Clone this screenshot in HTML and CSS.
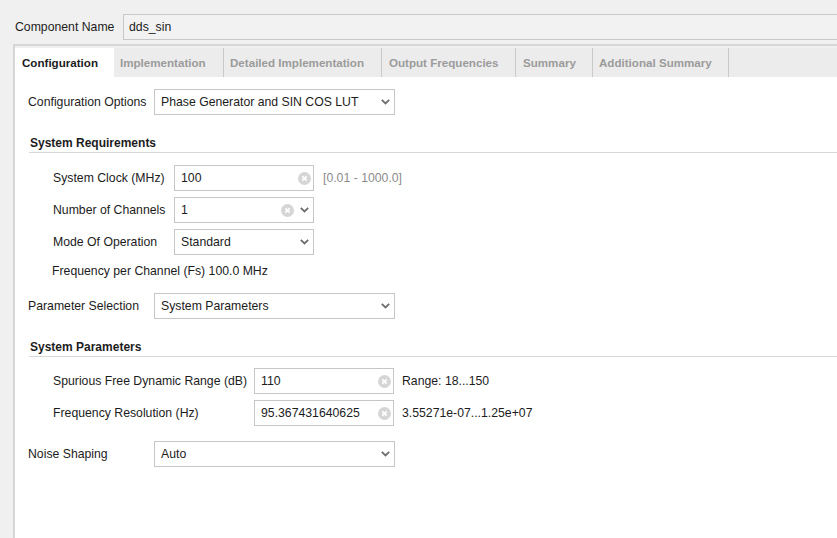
FILE: index.html
```html
<!DOCTYPE html>
<html>
<head>
<meta charset="utf-8">
<link rel="stylesheet" href="styles.css">
</head>
<body>
<div class="top">
  <span class="top-label">Component Name</span>
  <div class="name-field">dds_sin</div>
</div>
<div class="panel">
  <div class="tabs">
    <div class="tab active t1">Configuration</div>
    <div class="tab t2">Implementation</div>
    <div class="tab t3">Detailed Implementation</div>
    <div class="tab t4">Output Frequencies</div>
    <div class="tab t5">Summary</div>
    <div class="tab t6">Additional Summary</div>
  </div>
  <div class="content">
    <div class="row">
      <span class="lbl lbl-a">Configuration Options</span>
      <div class="select w-wide">
        <span class="val">Phase Generator and SIN COS LUT</span>
        <svg class="chev" width="9" height="6" viewBox="0 0 9 6"><path d="M0.8 0.8 L4.5 4.5 L8.2 0.8" fill="none" stroke="#6e6e6e" stroke-width="1.8"/></svg>
      </div>
    </div>

    <div class="section">System Requirements</div>
    <div class="sub">
      <div class="row">
        <span class="lbl lbl-b">System Clock (MHz)</span>
        <div class="input">
          <span class="val">100</span>
          <svg class="clear" width="13" height="13" viewBox="0 0 13 13"><circle cx="6.5" cy="6.5" r="6.5" fill="#d6d6d6"/><path d="M4.3 4.3 L8.7 8.7 M8.7 4.3 L4.3 8.7" stroke="#fff" stroke-width="1.7"/></svg>
        </div>
        <span class="hint grey">[0.01 - 1000.0]</span>
      </div>
      <div class="row">
        <span class="lbl lbl-b">Number of Channels</span>
        <div class="input combo">
          <span class="val">1</span>
          <svg class="clear" width="13" height="13" viewBox="0 0 13 13"><circle cx="6.5" cy="6.5" r="6.5" fill="#d6d6d6"/><path d="M4.3 4.3 L8.7 8.7 M8.7 4.3 L4.3 8.7" stroke="#fff" stroke-width="1.7"/></svg>
          <svg class="chev chev-gap" width="9" height="6" viewBox="0 0 9 6"><path d="M0.8 0.8 L4.5 4.5 L8.2 0.8" fill="none" stroke="#6e6e6e" stroke-width="1.8"/></svg>
        </div>
      </div>
      <div class="row">
        <span class="lbl lbl-b">Mode Of Operation</span>
        <div class="select w-narrow">
          <span class="val">Standard</span>
          <svg class="chev" width="9" height="6" viewBox="0 0 9 6"><path d="M0.8 0.8 L4.5 4.5 L8.2 0.8" fill="none" stroke="#6e6e6e" stroke-width="1.8"/></svg>
        </div>
      </div>
    </div>
    <div class="fs">Frequency per Channel (Fs) 100.0 MHz</div>

    <div class="row gap15">
      <span class="lbl lbl-a">Parameter Selection</span>
      <div class="select w-wide">
        <span class="val">System Parameters</span>
        <svg class="chev" width="9" height="6" viewBox="0 0 9 6"><path d="M0.8 0.8 L4.5 4.5 L8.2 0.8" fill="none" stroke="#6e6e6e" stroke-width="1.8"/></svg>
      </div>
    </div>

    <div class="section">System Parameters</div>
    <div class="sub sub-2">
      <div class="row">
        <span class="lbl lbl-c">Spurious Free Dynamic Range (dB)</span>
        <div class="input">
          <span class="val">110</span>
          <svg class="clear" width="13" height="13" viewBox="0 0 13 13"><circle cx="6.5" cy="6.5" r="6.5" fill="#d6d6d6"/><path d="M4.3 4.3 L8.7 8.7 M8.7 4.3 L4.3 8.7" stroke="#fff" stroke-width="1.7"/></svg>
        </div>
        <span class="hint">Range: 18...150</span>
      </div>
      <div class="row">
        <span class="lbl lbl-c">Frequency Resolution (Hz)</span>
        <div class="input">
          <span class="val">95.367431640625</span>
          <svg class="clear" width="13" height="13" viewBox="0 0 13 13"><circle cx="6.5" cy="6.5" r="6.5" fill="#d6d6d6"/><path d="M4.3 4.3 L8.7 8.7 M8.7 4.3 L4.3 8.7" stroke="#fff" stroke-width="1.7"/></svg>
        </div>
        <span class="hint">3.55271e-07...1.25e+07</span>
      </div>
    </div>

    <div class="row gap15">
      <span class="lbl lbl-a">Noise Shaping</span>
      <div class="select w-wide">
        <span class="val">Auto</span>
        <svg class="chev" width="9" height="6" viewBox="0 0 9 6"><path d="M0.8 0.8 L4.5 4.5 L8.2 0.8" fill="none" stroke="#6e6e6e" stroke-width="1.8"/></svg>
      </div>
    </div>
  </div>
</div>
</body>
</html>
```

FILE: styles.css
```css
html, body {
  margin: 0;
  padding: 0;
}
body {
  width: 837px;
  height: 538px;
  overflow: hidden;
  background: #f0f0f0;
  font-family: "Liberation Sans", Arial, sans-serif;
  font-size: 12.25px;
  color: #1c1c1c;
}
.top {
  display: flex;
  align-items: center;
  padding: 14px 0 0 15px;
}
.top-label {
  width: 108px;
  flex: none;
}
.name-field {
  flex: 1;
  height: 26px;
  box-sizing: border-box;
  border: 1px solid #c8c8c8;
  border-right: none;
  background: #f2f2f2;
  padding-left: 5px;
  display: flex;
  align-items: center;
}
.panel {
  margin: 4px 0 0 13px;
  border-top: 2px solid #d6d6d6;
  border-left: 2px solid #d6d6d6;
  padding-top: 2px;
  height: 494px;
  box-sizing: border-box;
  display: flex;
  flex-direction: column;
}
.tabs {
  display: flex;
  flex: none;
  height: 29px;
  background: #ececec;
}
.tab {
  box-sizing: border-box;
  height: 29px;
  padding: 0 0 1px 6px;
  display: flex;
  align-items: center;
  font-size: 11.6px;
  font-weight: bold;
  color: #9b9b9b;
  white-space: nowrap;
  border-right: 1px solid #c9c9c9;
}
.tab.active {
  background: #fff;
  color: #1c1c1c;
  border-right: none;
  padding-left: 7px;
}
.t1 { width: 99px; }
.t2 { width: 110px; }
.t3 { width: 158px; }
.t4 { width: 134px; padding-left: 7px; }
.t5 { width: 77px; padding-left: 7px; }
.t6 { width: 136px; }
.content {
  flex: 1;
  background: #fff;
  padding: 12px 0 0 13px;
  overflow: hidden;
}
.row {
  display: flex;
  align-items: center;
  height: 26px;
}
.gap15 {
  margin-top: 15px;
}
.lbl {
  flex: none;
  white-space: nowrap;
}
.lbl-a { width: 126px; }
.lbl-b { width: 121px; }
.lbl-c { width: 201px; }
.select,
.input {
  box-sizing: border-box;
  height: 26px;
  border: 1px solid #c6c6c6;
  background: #fff;
  display: flex;
  align-items: center;
  padding: 0 4px 0 6px;
  flex: none;
}
.w-wide { width: 241px; }
.w-narrow { width: 140px; }
.input {
  width: 140px;
  padding-right: 2px;
}
.input.combo {
  padding-right: 4px;
}
.val {
  flex: 1;
  white-space: nowrap;
}
.chev {
  display: block;
  flex: none;
}
.chev-gap {
  margin-left: 6px;
}
.clear {
  display: block;
  flex: none;
}
.hint {
  margin-left: 8px;
  white-space: nowrap;
}
.hint.grey {
  margin-left: 9px;
  color: #8c8c8c;
}
.section {
  margin: 21px 0 0 1px;
  padding: 0 0 2px 1px;
  line-height: 14px;
  font-size: 12px;
  font-weight: bold;
  border-bottom: 1px solid #d8d8d8;
}
.sub {
  margin-top: 12px;
  padding-left: 25px;
  display: flex;
  flex-direction: column;
  gap: 6px;
}
.sub-2 {
  margin-top: 11px;
}
.fs {
  margin-top: 9px;
  padding-left: 24px;
  line-height: 14px;
}
```
